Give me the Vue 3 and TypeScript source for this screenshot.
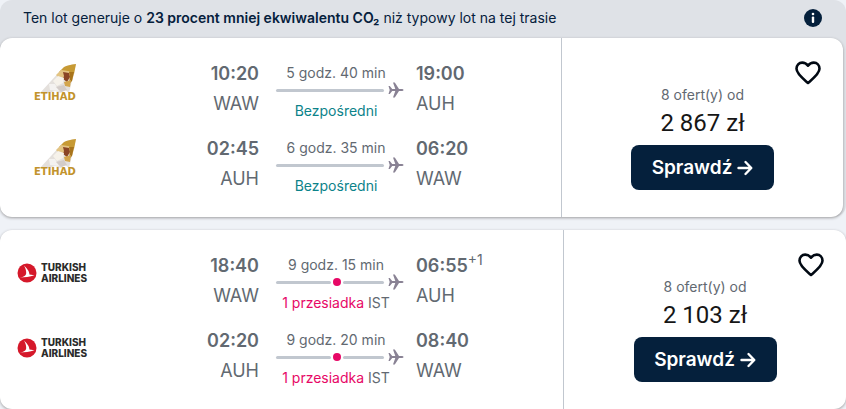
<script setup lang="ts">
interface Leg {
  depart: string
  from: string
  duration: string
  stop?: string
  arrive: string
  to: string
  dayShift?: string
}
interface Offer {
  airline: 'etihad' | 'turkish'
  eco: boolean
  offers: string
  price: string
  legs: Leg[]
}

const offers: Offer[] = [
  {
    airline: 'etihad',
    eco: true,
    offers: '8 ofert(y) od',
    price: '2 867 zł',
    legs: [
      { depart: '10:20', from: 'WAW', duration: '5 godz. 40 min', arrive: '19:00', to: 'AUH' },
      { depart: '02:45', from: 'AUH', duration: '6 godz. 35 min', arrive: '06:20', to: 'WAW' },
    ],
  },
  {
    airline: 'turkish',
    eco: false,
    offers: '8 ofert(y) od',
    price: '2 103 zł',
    legs: [
      { depart: '18:40', from: 'WAW', duration: '9 godz. 15 min', stop: 'IST', arrive: '06:55', to: 'AUH', dayShift: '+1' },
      { depart: '02:20', from: 'AUH', duration: '9 godz. 20 min', stop: 'IST', arrive: '08:40', to: 'WAW' },
    ],
  },
]
</script>

<template>
  <main class="results">
    <section v-for="offer in offers" :key="offer.airline" class="offer" :class="{ eco: offer.eco }">
      <header v-if="offer.eco" class="banner">
        <p class="banner-text">
          Ten lot generuje o <strong>23 procent mniej ekwiwalentu CO₂</strong> niż typowy lot na tej trasie
        </p>
        <button class="icon-button" type="button" aria-label="Informacje">
          <svg class="info" viewBox="0 0 18 18">
            <circle cx="9" cy="9" r="9" fill="#05203c" />
            <circle cx="9" cy="5" r="1.3" fill="#fff" />
            <rect x="7.8" y="7.4" width="2.4" height="6.6" rx="1" fill="#fff" />
          </svg>
        </button>
      </header>

      <article class="card">
        <div class="legs">
          <div v-for="leg in offer.legs" :key="leg.depart" class="leg">
            <div class="logo">
              <svg v-if="offer.airline === 'etihad'" class="etihad" viewBox="0 0 46 38" role="img" aria-label="Etihad">
                <path d="M7 29L29 5Q33 1 43 0L36 29L32 26L28 29L22 27L16 29Z" fill="#e4e0dc" />
                <path d="M26 8L31 3Q35 1 43 0L41 10L34 7Z" fill="#c79a34" />
                <path d="M23 11L28 6L35 7L41 10L39 17L34 14L28 16Z" fill="#e3c483" />
                <path d="M30 8L36 9L37 13L34 18L30 15L31 12Z" fill="#8a4526" />
                <path d="M36 8L41 8L39 17L36 20L37 13Z" fill="#a8741c" />
                <path d="M25 12L31 14L30 19L24 22L20 17Z" fill="#f6f2ea" />
                <path d="M31 18L38 16L37 23L32 22Z" fill="#d3a54c" />
                <path d="M16 20L22 20L26 27L17 26Z" fill="#f4f2f0" />
                <path d="M23 23L31 21L34 26L28 28Z" fill="#d3ccc8" />
                <text x="1" y="36" class="etihad-text">ETIHAD</text>
              </svg>
              <div v-else class="turkish">
                <svg class="turkish-mark" viewBox="0 0 20 20" aria-hidden="true">
                  <circle cx="10" cy="10" r="9.5" fill="#d5182a" />
                  <path d="M7 2.5C9.5 5 12.5 8 12.4 11.5L17.5 12.2C13 13.8 7.5 14.4 2.8 14.5C7 13.8 9 12.8 9.2 10C9.3 7 8.2 4.8 7 2.5Z" fill="#fff" />
                </svg>
                <div class="turkish-name">
                  <span>TURKISH</span>
                  <span>AIRLINES</span>
                </div>
              </div>
            </div>
            <div class="point depart">
              <span class="time">{{ leg.depart }}</span>
              <span class="code">{{ leg.from }}</span>
            </div>
            <div class="route">
              <span class="duration">{{ leg.duration }}</span>
              <div class="track">
                <span class="line"></span>
                <template v-if="leg.stop">
                  <span class="dot"></span>
                  <span class="line"></span>
                </template>
                <svg class="plane" viewBox="0 0 16 16" aria-hidden="true">
                  <path d="M0.5 4H1.8L4.2 7H7.3L5 0.5H6.8L11 7H14Q15.5 7.2 15.5 8Q15.5 8.8 14 9H11L6.8 15.5H5L7.3 9H4.2L1.8 12H0.5L1.7 8Z" fill="#898294" />
                </svg>
              </div>
              <span v-if="leg.stop" class="stops"><span class="stop-count">1 przesiadka</span> {{ leg.stop }}</span>
              <span v-else class="stops direct">Bezpośredni</span>
            </div>
            <div class="point">
              <span class="time">{{ leg.arrive }}<sup v-if="leg.dayShift" class="shift">{{ leg.dayShift }}</sup></span>
              <span class="code">{{ leg.to }}</span>
            </div>
          </div>
        </div>

        <aside class="summary">
          <button class="icon-button save" type="button" aria-label="Zapisz">
            <svg class="heart" viewBox="0 0 26 24">
              <path d="M13 22C9 18.5 1.5 12.8 1.5 7.8C1.5 4.2 4 1.6 7.2 1.6C9.8 1.6 11.6 2.8 13 4.6C14.4 2.8 16.2 1.6 18.8 1.6C22 1.6 24.5 4.2 24.5 7.8C24.5 12.8 17 18.5 13 22Z" fill="none" stroke="#010913" stroke-width="2.6" stroke-linejoin="round" />
            </svg>
          </button>
          <span class="offers">{{ offer.offers }}</span>
          <span class="price">{{ offer.price }}</span>
          <button class="check" type="button">
            Sprawdź
            <svg class="arrow" viewBox="0 0 16 16" aria-hidden="true">
              <path d="M1.5 8H14M8.5 2L14.3 8L8.5 14" fill="none" stroke="#fff" stroke-width="2.4" stroke-linecap="round" stroke-linejoin="round" />
            </svg>
          </button>
        </aside>
      </article>
    </section>
  </main>
</template>

<style>
body {
  background: #eff2f7;
}
</style>

<style scoped>
.results {
  display: flex;
  flex-direction: column;
  gap: 13px;
  font-family: Inter, "Liberation Sans", sans-serif;
  color: #626971;
}
.eco {
  padding-right: 3px;
  border-radius: 12px;
  background: #dfe2e7;
}
.banner {
  display: flex;
  align-items: center;
  justify-content: space-between;
  height: 38px;
  padding: 0 21px 3px 23px;
  box-sizing: border-box;
  color: #05203c;
}
.banner-text {
  margin: 0;
  font-size: 14px;
}
.banner-text strong {
  font-weight: 600;
}
.icon-button {
  display: flex;
  padding: 0;
  border: 0;
  background: none;
  cursor: pointer;
}
.info {
  width: 18px;
  height: 18px;
}
.card {
  display: grid;
  grid-template-columns: minmax(0, 199fr) minmax(0, 100fr);
  border-radius: 12px;
  background: #fff;
  box-shadow: 0 1px 3px rgba(37, 32, 31, 0.4);
}
.legs {
  display: flex;
  flex-direction: column;
  padding: 20px 0 9px;
}
.leg {
  display: grid;
  grid-template-columns: 136px 123px 128px 1fr;
  height: 75px;
}
.logo {
  padding: 6px 0 0 17px;
}
.etihad {
  display: block;
  width: 46px;
  height: 38px;
  margin-left: 16px;
}
.etihad-text {
  font-family: "DejaVu Sans", sans-serif;
  font-size: 10px;
  font-weight: 700;
  fill: #c2932c;
}
.turkish {
  display: flex;
  align-items: center;
  gap: 4px;
  padding-top: 6px;
}
.turkish-mark {
  width: 20px;
  height: 20px;
}
.turkish-name {
  display: flex;
  flex-direction: column;
  font: 800 10px/11px Inter, sans-serif;
  color: #2b2b2b;
}
.point {
  display: flex;
  flex-direction: column;
  padding: 1px 0 0 29px;
}
.depart {
  align-items: flex-end;
  padding-left: 0;
}
.time {
  font-size: 18px;
  font-weight: 600;
  line-height: 30px;
}
.code {
  font-size: 18px;
  line-height: 30px;
}
.shift {
  font-size: 14px;
  font-weight: 400;
  line-height: 0;
}
.route {
  display: flex;
  flex-direction: column;
  align-items: center;
  margin: 0 -17px 0 17px;
}
.duration,
.stops {
  padding-right: 8px;
  font-size: 14px;
  line-height: 30px;
  white-space: nowrap;
}
.stops {
  padding-top: 4px;
}
.direct {
  color: #0c838a;
}
.stop-count {
  color: #e70866;
}
.track {
  display: flex;
  align-items: center;
  align-self: stretch;
  gap: 2px;
  height: 4px;
}
.line {
  flex: 4;
  height: 3px;
  border-radius: 2px;
  background: #c1c7cf;
}
.dot {
  width: 8px;
  height: 8px;
  border-radius: 50%;
  background: #e70866;
}
.dot + .line {
  flex: 3;
}
.plane {
  width: 16px;
  height: 16px;
  margin-left: 2px;
}
.summary {
  position: relative;
  display: flex;
  flex-direction: column;
  align-items: center;
  padding-top: 46px;
  border-left: 1px solid #c1c7cf;
}
.save {
  position: absolute;
  top: 23px;
  right: 22px;
}
.heart {
  width: 26px;
  height: 24px;
}
.offers {
  font-size: 14px;
  line-height: 22px;
}
.price {
  font-family: Roboto, "Liberation Sans", sans-serif;
  font-size: 24px;
  line-height: 34px;
  color: #161616;
}
.check {
  display: flex;
  align-items: center;
  justify-content: center;
  gap: 5px;
  width: 143px;
  height: 45px;
  margin-top: 5px;
  border: 0;
  border-radius: 8px;
  background: #05203c;
  color: #fff;
  font: 600 19px Inter, "Liberation Sans", sans-serif;
  cursor: pointer;
}
.arrow {
  width: 16px;
  height: 16px;
}
</style>
